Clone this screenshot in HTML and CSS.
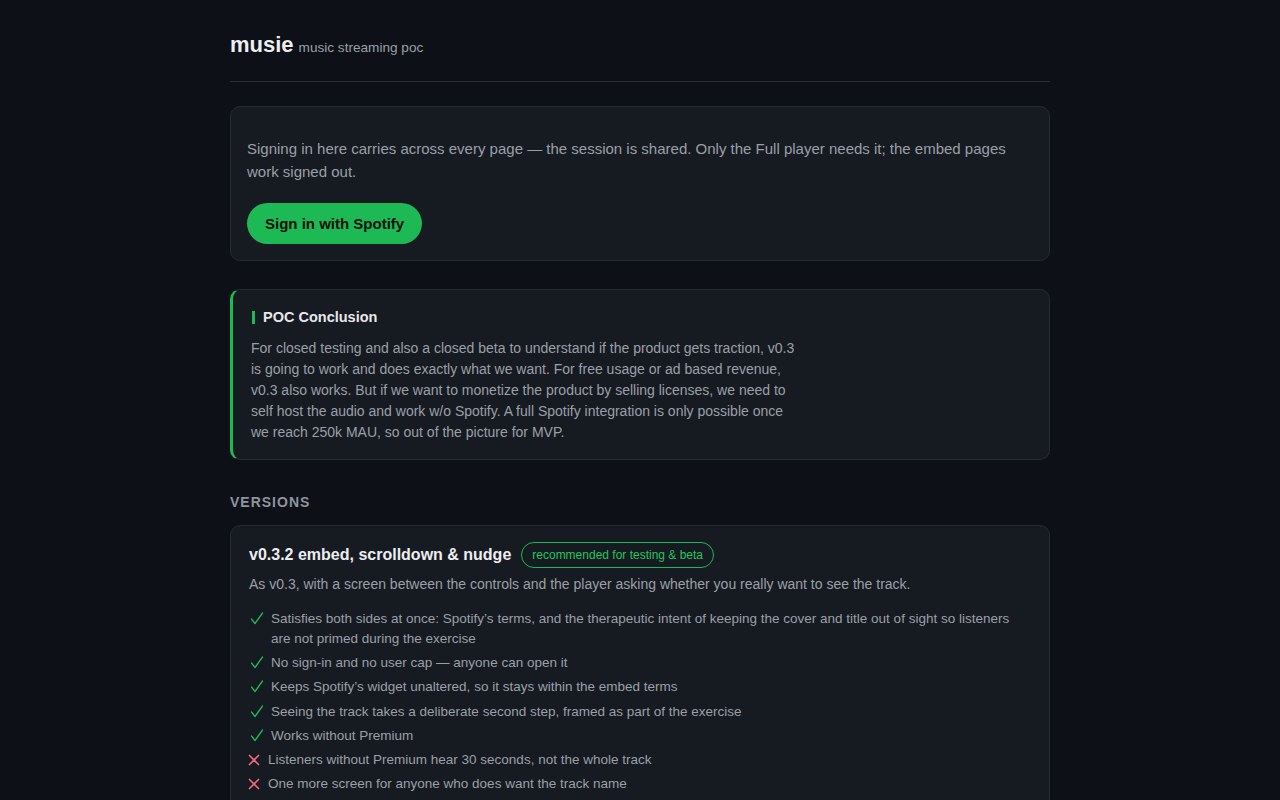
FILE: index.html
```html
<!DOCTYPE html>
<html lang="en">
<head>
<meta charset="utf-8">
<title>musie</title>
<link rel="stylesheet" href="styles.css">
</head>
<body>
<div class="page">
  <header class="header">
    <span class="brand">musie</span>
    <span class="tagline">music streaming poc</span>
  </header>

  <section class="card signin">
    <p class="signin-text">Signing in here carries across every page — the session is shared. Only the Full player needs it; the embed pages work signed out.</p>
    <button class="btn-spotify">Sign in with Spotify</button>
  </section>

  <section class="card conclusion">
    <h2 class="conclusion-title"><span class="bar"></span>POC Conclusion</h2>
    <p class="conclusion-text">For closed testing and also a closed beta to understand if the product gets traction, v0.3 is going to work and does exactly what we want. For free usage or ad based revenue, v0.3 also works. But if we want to monetize the product by selling licenses, we need to self host the audio and work w/o Spotify. A full Spotify integration is only possible once we reach 250k MAU, so out of the picture for MVP.</p>
  </section>

  <h3 class="section-label">Versions</h3>

  <section class="card version">
    <div class="version-head">
      <h4 class="version-title">v0.3.2 embed, scrolldown &amp; nudge</h4>
      <span class="badge">recommended for testing &amp; beta</span>
    </div>
    <p class="version-desc">As v0.3, with a screen between the controls and the player asking whether you really want to see the track.</p>
    <ul class="points">
      <li class="pro"><svg class="ico" viewBox="0 0 14 13" width="14" height="13"><path d="M1.5 7 L5 11.5 L12.5 1" fill="none" stroke="currentColor" stroke-width="1.3" stroke-linecap="round" stroke-linejoin="round"/></svg><span>Satisfies both sides at once: Spotify’s terms, and the therapeutic intent of keeping the cover and title out of sight so listeners are not primed during the exercise</span></li>
      <li class="pro"><svg class="ico" viewBox="0 0 14 13" width="14" height="13"><path d="M1.5 7 L5 11.5 L12.5 1" fill="none" stroke="currentColor" stroke-width="1.3" stroke-linecap="round" stroke-linejoin="round"/></svg><span>No sign-in and no user cap — anyone can open it</span></li>
      <li class="pro"><svg class="ico" viewBox="0 0 14 13" width="14" height="13"><path d="M1.5 7 L5 11.5 L12.5 1" fill="none" stroke="currentColor" stroke-width="1.3" stroke-linecap="round" stroke-linejoin="round"/></svg><span>Keeps Spotify’s widget unaltered, so it stays within the embed terms</span></li>
      <li class="pro"><svg class="ico" viewBox="0 0 14 13" width="14" height="13"><path d="M1.5 7 L5 11.5 L12.5 1" fill="none" stroke="currentColor" stroke-width="1.3" stroke-linecap="round" stroke-linejoin="round"/></svg><span>Seeing the track takes a deliberate second step, framed as part of the exercise</span></li>
      <li class="pro"><svg class="ico" viewBox="0 0 14 13" width="14" height="13"><path d="M1.5 7 L5 11.5 L12.5 1" fill="none" stroke="currentColor" stroke-width="1.3" stroke-linecap="round" stroke-linejoin="round"/></svg><span>Works without Premium</span></li>
      <li class="con"><svg class="ico" viewBox="0 0 12 12" width="12" height="12"><path d="M1.5 1.5 L10.5 10.5 M10.5 1.5 L1.5 10.5" fill="none" stroke="currentColor" stroke-width="1.7" stroke-linecap="round"/></svg><span>Listeners without Premium hear 30 seconds, not the whole track</span></li>
      <li class="con"><svg class="ico" viewBox="0 0 12 12" width="12" height="12"><path d="M1.5 1.5 L10.5 10.5 M10.5 1.5 L1.5 10.5" fill="none" stroke="currentColor" stroke-width="1.7" stroke-linecap="round"/></svg><span>One more screen for anyone who does want the track name</span></li>
    </ul>
  </section>
</div>
</body>
</html>
```

FILE: styles.css
```css
* { box-sizing: border-box; }

html, body {
  margin: 0;
  padding: 0;
  background: #0d1017;
}

body {
  font-family: "Liberation Sans", Arial, sans-serif;
  color: #e6e8eb;
}

.page {
  width: 820px;
  margin: 0 auto;
  padding-top: 32px;
  padding-bottom: 40px;
}

.header {
  display: flex;
  align-items: baseline;
  gap: 5px;
  padding-bottom: 23px;
  border-bottom: 1px solid #2a2f37;
  margin-bottom: 24px;
}

.brand {
  font-size: 22px;
  font-weight: 700;
  color: #eceef1;
}

.tagline {
  font-size: 13.6px;
  color: #9aa0a8;
}

.card {
  background: #161a21;
  border: 1px solid #262b33;
  border-radius: 10px;
}

.signin {
  padding: 30px 16px 16px;
  margin-bottom: 28px;
}

.signin-text {
  margin: 0 0 20px;
  font-size: 15px;
  line-height: 23px;
  color: #9aa0a8;
}

.btn-spotify {
  display: inline-block;
  border: 0;
  background: #1db954;
  color: #0b0f0c;
  font-family: "Liberation Sans", Arial, sans-serif;
  font-size: 15px;
  font-weight: 700;
  height: 41px;
  padding: 0 18px 1px;
  border-radius: 21px;
}

.conclusion {
  border-left: 3px solid #1db954;
  padding: 17px 18px 16px;
  margin-bottom: 32px;
}

.conclusion-title {
  display: flex;
  align-items: center;
  gap: 8px;
  margin: 0 0 11px;
  font-size: 14.5px;
  line-height: 20px;
  font-weight: 700;
  color: #e6e8eb;
}

.bar {
  display: inline-block;
  width: 3px;
  height: 13px;
  background: #1db954;
  margin-left: 1px;
}

.conclusion-text {
  margin: 0;
  max-width: 548px;
  font-size: 14px;
  line-height: 21px;
  color: #9aa0a8;
}

.section-label {
  margin: 0 0 13px;
  font-size: 14px;
  line-height: 20px;
  font-weight: 700;
  letter-spacing: 1px;
  text-transform: uppercase;
  color: #8e959e;
}

.version {
  padding: 16px 18px 18px;
}

.version-head {
  display: flex;
  align-items: center;
  gap: 10px;
  margin-bottom: 6px;
}

.version-title {
  margin: 0;
  font-size: 16px;
  font-weight: 700;
  color: #eceef1;
}

.badge {
  display: inline-flex;
  align-items: center;
  height: 26px;
  padding: 0 10px;
  border: 1px solid #1db954;
  border-radius: 13px;
  font-size: 12px;
  color: #22c55e;
}

.version-desc {
  margin: 0 0 15px;
  font-size: 14px;
  line-height: 20px;
  color: #9aa0a8;
}

.points {
  list-style: none;
  margin: 0;
  padding: 0;
  display: flex;
  flex-direction: column;
  gap: 4.2px;
}

.points li {
  display: flex;
  align-items: flex-start;
  font-size: 13.5px;
  line-height: 20px;
  color: #9aa0a8;
}

.points .ico {
  flex: none;
  margin-top: 3px;
}

.pro .ico {
  color: #22b455;
  margin-left: 1px;
  margin-right: 7px;
}

.con .ico {
  color: #f0697a;
  margin-left: -1px;
  margin-right: 8px;
  margin-top: 4px;
}
```
